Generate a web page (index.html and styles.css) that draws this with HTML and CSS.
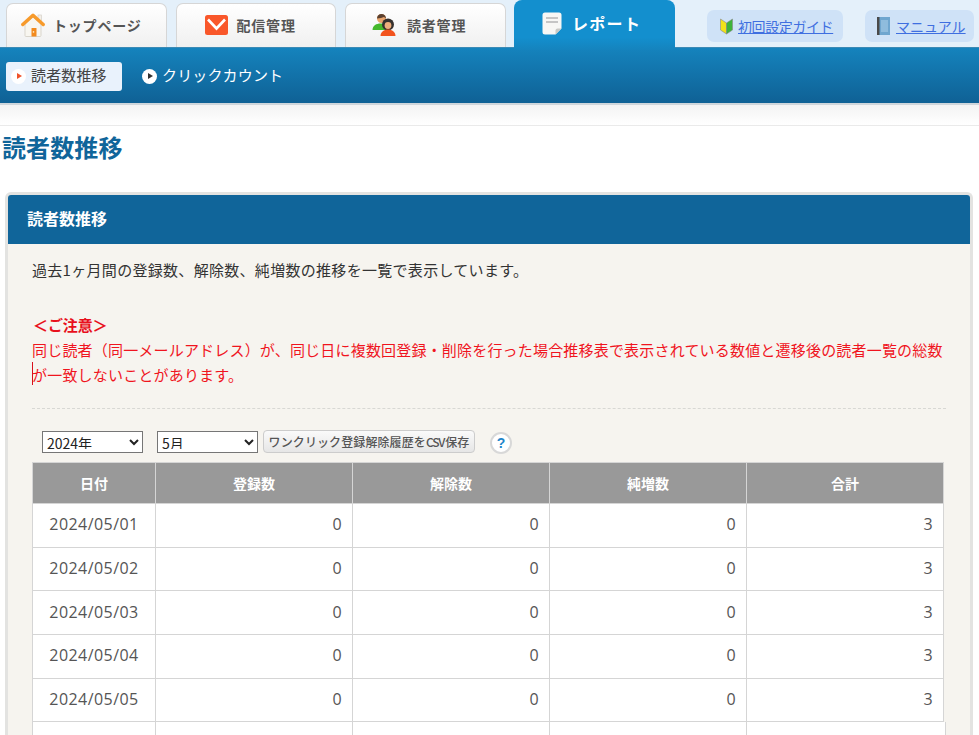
FILE: index.html
```html
<!DOCTYPE html>
<html lang="ja">
<head>
<meta charset="utf-8">
<title>読者数推移</title>
<link rel="stylesheet" href="styles.css">
</head>
<body>
<header class="top">
  <nav class="tabs">
    <a class="tab t1"><svg class="ic" width="24" height="24" viewBox="0 0 24 24"><rect x="17" y="2" width="3.500" height="7" fill="#f3efe8" stroke="#d5d0c8" stroke-width=".7"/><path d="M4 11v11.500a1 1 0 0 0 1 1h14a1 1 0 0 0 1-1V11L12 4z" fill="#f8f6f0" stroke="#d9d5cc"/><path d="M1.800 11.500 12 2.200l10.200 9.300" fill="none" stroke="#f79a2b" stroke-width="3.400" stroke-linecap="round" stroke-linejoin="round"/><rect x="10.500" y="15" width="5" height="8.500" rx=".5" fill="#f28a1e"/><rect x="11.800" y="18" width="1.400" height="1.800" fill="#fbe0b0"/></svg><span>トップページ</span></a>
    <a class="tab t2"><svg class="ic" width="23" height="20" viewBox="0 0 23 20"><rect width="23" height="20" rx="2.500" fill="#f9572a"/><path d="M3 4.500l8.500 9 8.500-9" fill="none" stroke="#fff" stroke-width="2.600"/></svg><span>配信管理</span></a>
    <a class="tab t3"><svg class="ic" width="24" height="23" viewBox="0 0 24 23"><circle cx="9.500" cy="5.500" r="4.500" fill="#e8a56e"/><path d="M5 5.500a4.500 4.500 0 0 1 9 0l-2-1.500-3 1z" fill="#5a4030"/><path d="M.5 17c0-4.500 4-6.500 8-6.500s6 2 6 6.500z" fill="#45b82c"/><circle cx="16" cy="11.500" r="6" fill="#35302d"/><circle cx="16" cy="12.500" r="3.400" fill="#efae7c"/><path d="M8.500 23c0-4 3.500-6.500 7.500-6.500s7.500 2.500 7.500 6.500z" fill="#f2531d"/></svg><span>読者管理</span></a>
    <a class="tab active"><svg class="ic" width="20" height="23" viewBox="0 0 20 23"><path d="M3 .5h14a2.500 2.500 0 0 1 2.500 2.500v13.500l-6 6H3A2.500 2.500 0 0 1 .5 20V3A2.500 2.500 0 0 1 3 .5z" fill="#f7f7f5"/><path d="M4 6h12M4 10h12" stroke="#b5b5b5" stroke-width="1.400"/><path d="M13.500 22.500v-4a2 2 0 0 1 2-2h4z" fill="#c9c9c5"/></svg><span>レポート</span></a>
  </nav>
  <div class="links">
    <a class="guide g1"><svg class="gi" width="13" height="17" viewBox="0 0 13 17"><path d="M.5 1l6 4v11l-6-4z" fill="#f2e21a" stroke="#888" stroke-width=".6"/><path d="M12.500 1l-6 4v11l6-4z" fill="#3eb33a" stroke="#888" stroke-width=".6"/></svg><span>初回設定ガイド</span></a>
    <a class="guide g2"><svg class="gi" width="13" height="18" viewBox="0 0 13 18"><rect width="13" height="18" fill="#6fa6cf"/><rect width="2.500" height="18" fill="#4a4a4a"/><rect x="4" y="3" width="7" height="12" fill="#8fbcdd"/></svg><span>マニュアル</span></a>
  </div>
</header>
<div class="subbar">
  <a class="sub current"><i class="dot"><b></b></i>読者数推移</a>
  <a class="sub"><i class="dot"><b></b></i>クリックカウント</a>
</div>
<div class="strip"></div>
<h1 class="title">読者数推移</h1>
<section class="panel">
  <h2 class="phead">読者数推移</h2>
  <div class="pbody">
    <p class="lead">過去1ヶ月間の登録数、解除数、純増数の推移を一覧で表示しています。</p>
    <div class="notice">
      <p class="nhead">＜ご注意＞</p>
      <p class="ntext">同じ読者（同一メールアドレス）が、同じ日に複数回登録・削除を行った場合推移表で表示されている数値と遷移後の読者一覧の総数が一致しないことがあります。<i class="caret"></i></p>
    </div>
    <div class="controls">
      <select class="sel"><option>2024年</option></select>
      <select class="sel"><option>5月</option></select>
      <button class="csv" type="button">ワンクリック登録解除履歴を<span class="cond">CSV</span>保存</button>
      <span class="help">?</span>
    </div>
    <table class="grid">
      <thead><tr><th class="c1">日付</th><th>登録数</th><th>解除数</th><th>純増数</th><th>合計</th></tr></thead>
      <tbody>
        <tr><td class="d">2024/05/01</td><td>0</td><td>0</td><td>0</td><td>3</td></tr>
        <tr><td class="d">2024/05/02</td><td>0</td><td>0</td><td>0</td><td>3</td></tr>
        <tr><td class="d">2024/05/03</td><td>0</td><td>0</td><td>0</td><td>3</td></tr>
        <tr><td class="d">2024/05/04</td><td>0</td><td>0</td><td>0</td><td>3</td></tr>
        <tr><td class="d">2024/05/05</td><td>0</td><td>0</td><td>0</td><td>3</td></tr>
      </tbody>
    </table>
    <div class="clipped"></div>
  </div>
</section>
</body>
</html>
```
FILE: styles.css
```css
* { box-sizing: border-box; }
html, body { margin: 0; padding: 0; height: 735px; overflow: hidden; background: #fff; }
body { font-family: "Noto Sans CJK JP", "Liberation Sans", sans-serif; color: #333; width: 979px; }
p, h1, h2 { margin: 0; }

.top { height: 47px; background: #e4f0fa; display: flex; justify-content: space-between; position: relative; z-index: 2; }
.tabs { display: flex; align-items: flex-end; padding-left: 6px; gap: 9px; }
.tab { width: 160.5px; height: 44px; border: 1px solid #d6d6d6; border-bottom: 0; border-radius: 7px 7px 0 0; background: linear-gradient(#fff, #f0f0f0); display: flex; align-items: center; font-size: 14px; font-weight: 700; color: #555; letter-spacing: .8px; padding-bottom: 2px; }
.ic { flex: none; }
.t1 { gap: 8px; padding-left: 14px; }
.t2 { gap: 9px; padding-left: 28px; }
.t3 { gap: 11px; padding-left: 26px; }
.active { width: 161px; height: 50px; margin-left: -.5px; border: 0; border-radius: 8px 8px 0 0; background: linear-gradient(#138fce 75%, #1583bd); color: #fff; font-size: 16px; letter-spacing: 1.300px; gap: 10px; padding: 0 0 4px 28px; position: relative; top: 3px; }
.links { display: flex; gap: 22px; padding: 10px 5px 0 0; align-items: flex-start; }
.guide { height: 32px; background: #cfe2f7; border-radius: 7px; display: flex; align-items: center; gap: 6px; font-size: 14px; color: #3f6fe0; }
.guide span { text-decoration: underline; }
.g1 { width: 136px; padding-left: 13px; gap: 5px; }
.g1 span { letter-spacing: -.4px; }
.g2 { width: 109px; padding-left: 12px; gap: 6px; }
.gi { flex: none; }

.subbar { height: 58px; background: linear-gradient(#1583bd, #0f6195); border-top: 1px solid #3b8ab5; border-bottom: 2px solid #cfd6db; display: flex; align-items: center; padding: 1px 0 0 6px; gap: 20px; font-size: 15px; color: #fff; position: relative; z-index: 1; letter-spacing: .15px; }
.sub { display: flex; align-items: center; gap: 5px; height: 29px; padding-bottom: 3px; }
.current { width: 116px; background: #e9f2fc; color: #444; border-radius: 3px; padding-left: 5px; gap: 5px; }
.dot { width: 15px; height: 15px; margin-top: 3px; border-radius: 50%; background: #fff; display: flex; align-items: center; justify-content: center; flex: none; }
.dot b { width: 0; height: 0; border-left: 5px solid #333; border-top: 3.500px solid transparent; border-bottom: 3.500px solid transparent; margin-left: 2px; }
.current .dot b { border-left-color: #f0532a; }

.strip { height: 21px; background: linear-gradient(#f3f3f3, #fff); border-bottom: 1px solid #eaeaea; }
.title { font-size: 24px; line-height: 34px; font-weight: 700; color: #10659a; padding: 4px 0 0 2px; height: 66px; letter-spacing: .1px; }

.panel { margin: 0 6px 0 5px; border: 3px solid #e3e3e1; border-bottom: 0; border-radius: 6px 6px 0 0; background: #f6f4ef; height: 600px; }
.phead { background: #10659a; color: #fff; font-size: 16px; font-weight: 700; height: 49px; line-height: 47px; padding-left: 19px; border-radius: 3px 3px 0 0; }
.pbody { padding: 0 24px; }
.lead { font-size: 15px; line-height: 25px; padding-top: 13px; height: 68px; letter-spacing: .3px; }
.notice { color: #f0141e; font-size: 15px; line-height: 25px; padding-bottom: 21px; border-bottom: 1px dashed #d8d8d4; letter-spacing: .19px; position: relative; }
.nhead { font-weight: 700; color: #e8101c; height: 25px; letter-spacing: -.1px; padding-left: 1px; }
.ntext { height: 50px; }
.caret { position: absolute; left: 0; top: 50px; width: 1px; height: 23px; background: #d8101c; }
.controls { display: flex; align-items: center; height: 54px; padding-left: 10px; padding-top: 11px; }
.sel { width: 101px; height: 22px; font-size: 14px; line-height: 18px; font-family: "Noto Sans CJK JP", sans-serif; margin-right: 14px; background: #fff; padding: 0 0 3px; border: 1px solid #767676; border-radius: 0; color: #222; }
.sel + .sel { margin-right: 5px; }
.csv { width: 212px; height: 23px; font-size: 12px; font-weight: 500; color: #555; background: linear-gradient(#fafafa, #e6e6e6); border: 1px solid #ccc; border-radius: 4px; padding: 0; white-space: nowrap; font-family: "Noto Sans CJK JP", sans-serif; letter-spacing: .1px; }
.cond { letter-spacing: -1.200px; margin-right: 1px; }
.help { width: 22px; height: 22px; margin: 2px 0 0 15px; border: 2px solid #d8d8d8; border-radius: 50%; background: #fff; color: #1f86c9; font-weight: 700; font-size: 14px; display: flex; align-items: center; justify-content: center; font-family: "Liberation Sans", sans-serif; }

.grid { width: 912px; border-collapse: collapse; table-layout: fixed; background: #fff; margin-top: -1px; }
.grid th { background: #999; color: #fff; height: 41px; font-size: 14px; font-weight: 700; border: 1px solid #d5d5d5; }
.grid td { height: 43.700px; font-size: 16px; text-align: right; padding: 0 10px 2px; border: 1px solid #d5d5d5; color: #555; font-family: "Open Sans", "Liberation Sans", sans-serif; letter-spacing: .45px; }
.grid .d { text-align: center; padding: 0 0 2px; }
.c1 { width: 123px; }
.clipped { height: 13px; border-left: 1px solid #d5d5d5; border-right: 1px solid #d5d5d5; background: linear-gradient(to right, #fff 122px, #d5d5d5 122px, #d5d5d5 123px, #fff 123px, #fff 319px, #d5d5d5 319px, #d5d5d5 320px, #fff 320px, #fff 516px, #d5d5d5 516px, #d5d5d5 517px, #fff 517px, #fff 713px, #d5d5d5 713px, #d5d5d5 714px, #fff 714px); }
```
